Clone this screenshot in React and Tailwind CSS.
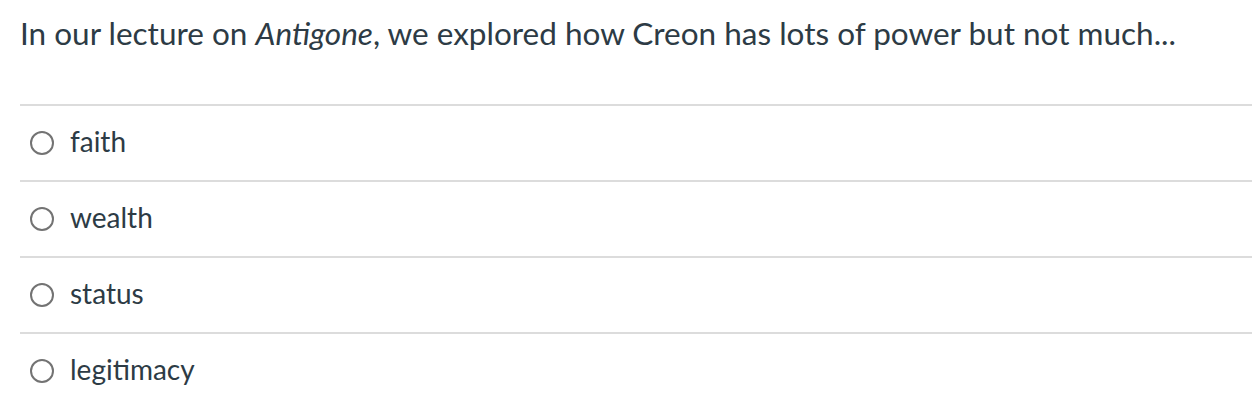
import React from 'react';

const options = ['faith', 'wealth', 'status', 'legitimacy'];

const App = () => {
  return (
    <div className="w-[1252px] h-[408px] bg-white overflow-hidden pl-5 text-[#2d3b45]" style={{ fontFamily: 'Lato, "Open Sans", sans-serif' }}>
      <div className="pt-[13px] h-[104px] text-[31.5px] leading-[40px]">
        In our lecture on <em>Antigone</em>, we explored how Creon has lots of power but not much...
      </div>
      <div>
        {options.map((opt) => (
          <div key={opt} className="h-[76px] border-t-2 border-[#dcdcdc] flex items-center pl-[10px]">
            <span className="w-[24px] h-[24px] rounded-full border-2 border-[#737373] mr-[16px] shrink-0" />
            <span className="text-[28px] leading-none pb-[4px]">{opt}</span>
          </div>
        ))}
      </div>
    </div>
  );
};

export default App;
